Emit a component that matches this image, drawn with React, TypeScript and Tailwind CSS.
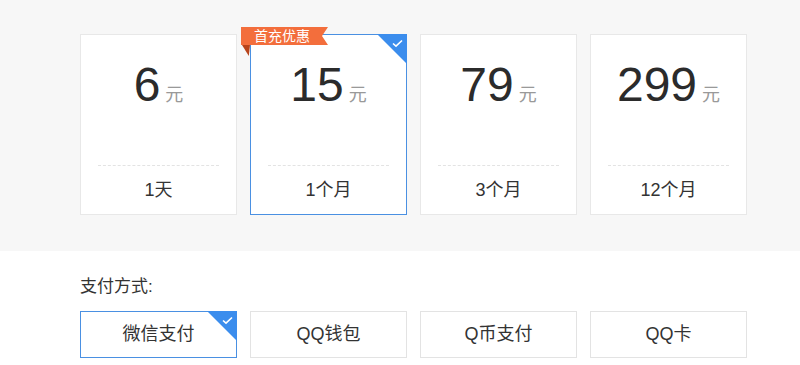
import { clsx } from "clsx";

const plans = [
  { price: "6", label: "1天" },
  { price: "15", label: "1个月", selected: true, promo: "首充优惠" },
  { price: "79", label: "3个月" },
  { price: "299", label: "12个月" },
];

const payments = [
  { name: "微信支付", selected: true },
  { name: "QQ钱包" },
  { name: "Q币支付" },
  { name: "QQ卡" },
];

const CheckCorner = () => (
  <div className="absolute -top-px -right-px h-[30px] w-[30px] bg-[#3b8ded] [clip-path:polygon(0_0,100%_0,100%_100%)]">
    <svg
      className="absolute top-[5px] right-[4px]"
      width="11"
      height="9"
      viewBox="0 0 11 9"
      fill="none"
    >
      <path d="M1 4.5 L4 7.2 L10 1.5" stroke="white" strokeWidth="1.6" />
    </svg>
  </div>
);

const App = () => {
  return (
    <div className="h-[365px] w-[800px] overflow-hidden bg-white font-['Liberation_Sans','Noto_Sans_CJK_SC',sans-serif] text-[#333]">
      <div className="h-[251px] bg-[#f7f7f7] pt-[34px] pl-[80px]">
        <div className="flex gap-[13px]">
          {plans.map((plan) => (
            <div
              key={plan.price}
              className={clsx(
                "relative flex h-[181px] w-[157px] flex-col border bg-white",
                plan.selected ? "border-[#4a90e2]" : "border-[#e8e8e8]",
              )}
            >
              {plan.promo && (
                <>
                  <div className="absolute -top-[8px] -left-[10px] flex h-[18px] w-[87px] items-center bg-[#f36e3c] pl-[13px] text-[14px] leading-none text-white [clip-path:polygon(0_0,100%_0,calc(100%-6px)_50%,100%_100%,0_100%)]">
                    {plan.promo}
                  </div>
                  <div className="absolute top-[10px] -left-[9px] h-[11px] w-[8px] bg-[#b8441b] [clip-path:polygon(0_0,100%_0,85%_100%)]" />
                </>
              )}
              {plan.selected && <CheckCorner />}

              <div className="flex items-baseline justify-center pt-[26px]">
                <span className="text-[48px] leading-[48px] text-[#2b2b2b]">
                  {plan.price}
                </span>
                <span className="ml-[5px] text-[18px] text-[#999]">元</span>
              </div>

              <div className="mx-[17px] mt-auto border-t border-dashed border-[#e3e3e3]" />
              <div className="flex h-[48px] items-center justify-center text-[18px]">
                {plan.label}
              </div>
            </div>
          ))}
        </div>
      </div>

      <div className="pl-[80px]">
        <div className="pt-[26px] text-[17px] leading-[20px]">支付方式:</div>
        <div className="mt-[14px] flex gap-[13px]">
          {payments.map((pay) => (
            <div
              key={pay.name}
              className={clsx(
                "relative flex h-[47px] w-[157px] items-center justify-center border bg-white text-[18px]",
                pay.selected ? "border-[#4a90e2]" : "border-[#e3e3e3]",
              )}
            >
              {pay.selected && <CheckCorner />}
              {pay.name}
            </div>
          ))}
        </div>
      </div>
    </div>
  );
};

export default App;
